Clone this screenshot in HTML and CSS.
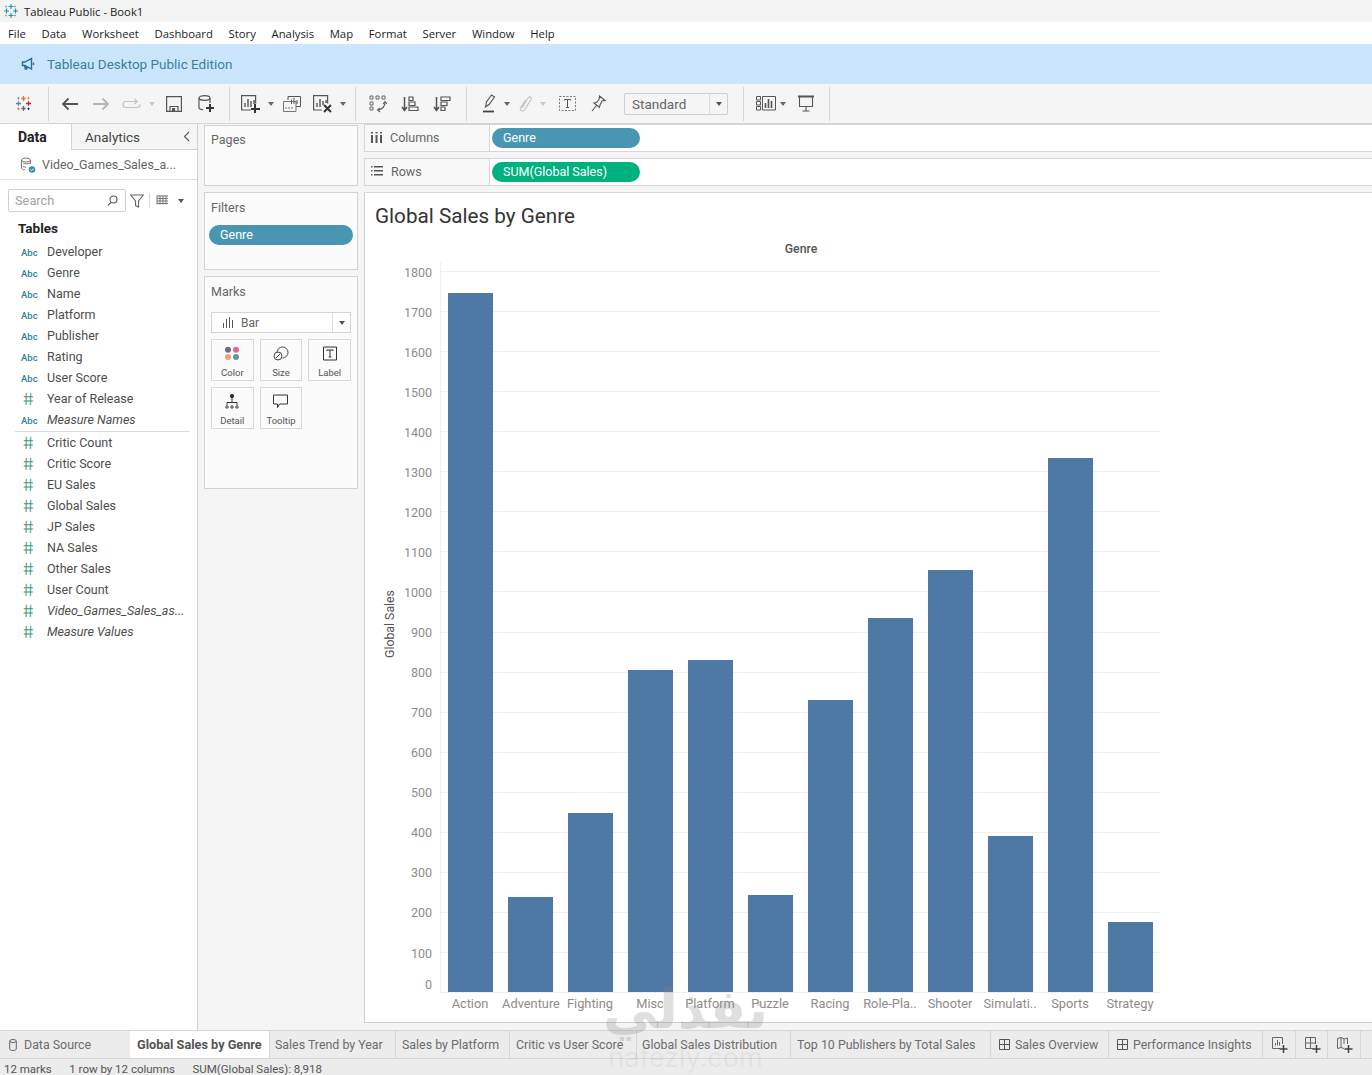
FILE: index.html
```html
<!DOCTYPE html>
<html>
<head>
<meta charset="utf-8">
<title>Tableau Public - Book1</title>
<link rel="stylesheet" href="styles.css">
</head>
<body>
<div class="titlebar">
  <svg class="app-icon" width="16" height="16" viewBox="0 0 16 16" fill="none" stroke="#2f8fa8" stroke-width="1.2">
    <path d="M8 1v5M5.5 3.5h5M8 10v5M5.500 12.500h5M1 8h5M3.500 5.500v5M10 8h5M12.500 5.500v5"/>
    <path d="M3 2.500v2M2 3.500h2M12 2.500v2M11 3.500h2M3 11.500v2M2 12.500h2M12 11.500v2M11 12.500h2" stroke="#7cb7c9" stroke-width="1"/>
  </svg>
  <span>Tableau Public - Book1</span>
</div>
<ul class="menubar">
  <li>File</li><li>Data</li><li>Worksheet</li><li>Dashboard</li><li>Story</li><li>Analysis</li><li>Map</li><li>Format</li><li>Server</li><li>Window</li><li>Help</li>
</ul>
<div class="banner">
  <svg width="14" height="14" viewBox="0 0 14 14" fill="none" stroke="#2b6f94" stroke-width="1.4">
    <path d="M1.500 5v3.500h2.500L10.500 12V1.500L4 5zM3.500 8.500l.8 3.500h1.500l-.6-3M12.500 5.500v2.500"/>
  </svg>
  <span>Tableau Desktop Public Edition</span>
</div>

<div class="toolbar">
  <div class="tb-group tb-logo">
    <svg width="17" height="17" viewBox="0 0 17 17" fill="none" stroke-width="1.300">
      <path d="M8.500 1v5M6.300 3.500h4.400" stroke="#e8762c"/>
      <path d="M8.500 11v5M6.300 13.500h4.400" stroke="#5b6591"/>
      <path d="M1 8.500h5M3.500 6.300v4.400" stroke="#59879b"/>
      <path d="M11 8.500h5M13.500 6.300v4.400" stroke="#c72037"/>
      <path d="M3.500 2v2.500M2.300 3.200h2.400" stroke="#7099a6" stroke-width="1"/>
      <path d="M13.500 2v2.500M12.300 3.200h2.400" stroke="#eb912b" stroke-width="1"/>
      <path d="M3.500 12.500v2.500M2.300 13.800h2.400" stroke="#e8762c" stroke-width="1"/>
      <path d="M13.500 12.500v2.500M12.300 13.800h2.400" stroke="#1f447e" stroke-width="1"/>
    </svg>
  </div>
  <div class="tb-group tb-g1">
    <span class="tool"><svg width="18" height="14" viewBox="0 0 18 14" fill="none" stroke="#555" stroke-width="1.800"><path d="M17 7H2M7.500 1.500 2 7l5.500 5.500"/></svg></span>
    <span class="tool"><svg width="18" height="14" viewBox="0 0 18 14" fill="none" stroke="#b5b5b5" stroke-width="1.800"><path d="M1 7h15M10.500 1.500 16 7l-5.500 5.500"/></svg></span>
    <span class="tool"><svg width="19" height="12" viewBox="0 0 19 12" fill="none" stroke="#c4c4c4" stroke-width="1.200"><path d="M15 3.500H4a3 3 0 0 0 0 6h11a3 3 0 0 0 3-3M12.500 1l2.800 2.500-2.800 2.500"/></svg></span>
    <span class="caret caret-off"></span>
    <span class="tool tool-save"><svg width="16" height="16" viewBox="0 0 16 16" fill="none" stroke="#555" stroke-width="1.200"><path d="M.6.600h14.800v14.800H.6zM4 15.400V10.500h8v4.900"/><path d="M6 12h3v3H6z" fill="#555" stroke="none"/></svg></span>
    <span class="tool tool-ds"><svg width="16" height="18" viewBox="0 0 16 18" fill="none" stroke="#555" stroke-width="1.200"><ellipse cx="6.500" cy="3" rx="5.500" ry="2.300"/><path d="M1 3v9.500c0 1.200 1.800 2 4 2.200M12 3v5"/><path d="M12 9v8M8 13h8" stroke="#333" stroke-width="2"/></svg></span>
  </div>
  <div class="tb-group tb-g2">
    <span class="tool"><svg width="19" height="18" viewBox="0 0 19 18" fill="none" stroke="#555" stroke-width="1.200"><path d="M10 15H.6V.6h14v8"/><path d="M4 12V8M7 12V4M10 12V6M13 9V5" stroke-width="1.400"/><path d="M14 9v9M10 14h9" stroke="#333" stroke-width="2"/></svg></span>
    <span class="caret"></span>
    <span class="tool"><svg width="18" height="16" viewBox="0 0 18 16" fill="none" stroke="#555" stroke-width="1"><path d="M5 4V.5h12.500v10H13"/><path d="M.5 5.500h12.500v10H.5z" stroke="#777"/><path d="M8.500 8V3.500M11 8V2M14 8V4"/><path d="M3 13v-2M6 13v-2M9 13v-2" stroke="#777"/></svg></span>
    <span class="tool"><svg width="19" height="18" viewBox="0 0 19 18" fill="none" stroke="#555" stroke-width="1.200"><path d="M9 15H.6V.6h14v8"/><path d="M4 12V8M7 12V4M10 10V6M13 8V5" stroke-width="1.400"/><path d="m11 10 7 7M18 10l-7 7" stroke="#333" stroke-width="2"/></svg></span>
    <span class="caret"></span>
  </div>
  <div class="tb-group tb-g3">
    <span class="tool"><svg width="18" height="18" viewBox="0 0 18 18" fill="none" stroke="#666" stroke-width="1"><path d="M1 1h3v3H1zM7 1h3v3H7zM13 1h3v3h-3zM1 7h3v3H1zM1 12h3v3H1z"/><path d="M16 7c0 4-2 7-7 8" stroke-width="1.300"/><path d="m14 9 2-2.500L18 9M11 13l-2.500 2 2.500 2" stroke-width="1.200"/></svg></span>
    <span class="tool tool-wide"><svg width="18" height="16" viewBox="0 0 18 16" fill="none" stroke="#555" stroke-width="1.200"><path d="M3.500 1v13M1 11l2.500 3.500L6 11" stroke-width="1.500"/><path d="M8 1h4v3.500H8zM8 6h6v3.500H8zM8 11h9v3.500H8z"/></svg></span>
    <span class="tool tool-wide"><svg width="18" height="16" viewBox="0 0 18 16" fill="none" stroke="#555" stroke-width="1.200"><path d="M3.500 1v13M1 11l2.500 3.500L6 11" stroke-width="1.500"/><path d="M8 1h9v3.500H8zM8 6h6v3.500H8zM8 11h4v3.500H8z"/></svg></span>
  </div>
  <div class="tb-group tb-g4">
    <span class="tool-sm"><svg width="14" height="19" viewBox="0 0 14 19" fill="none" stroke="#555" stroke-width="1.100"><path d="M3.500 13 4.500 8 9.500 1l3 2-5 7zM3.500 13l4-3"/><path d="M1 17.500h11" stroke="#444" stroke-width="1.800"/></svg></span>
    <span class="caret"></span>
    <span class="tool-sm"><svg width="13" height="17" viewBox="0 0 13 17" fill="none" stroke="#c4c4c4" stroke-width="1.200"><path d="M3 13 9 3c1.500-2.200 4-.8 3 1.500L5.500 15c-1.500 2-5 .5-4-2L6.500 5"/></svg></span>
    <span class="caret caret-off"></span>
    <span class="tool tool-t"><svg width="17" height="15" viewBox="0 0 17 15" fill="none" stroke="#777" stroke-width="1"><path d="M.5.500h16v14H.5z" stroke-dasharray="2 1.500"/><path d="M5.500 4.500v-1h6v1M8.500 3.500v8M7 11.500h3" stroke="#555"/></svg></span>
    <span class="tool"><svg width="15" height="17" viewBox="0 0 15 17" fill="none" stroke="#555" stroke-width="1.100"><path d="m8.500 1 5.500 4.500-3 .5-2 4-.5 2.500L3 8l2.500-.5L8 4.500zM5.500 10.500 1 16"/></svg></span>
    <div class="select">
      <span class="select-text">Standard</span>
      <span class="select-arrow"><span class="caret caret-dark"></span></span>
    </div>
  </div>
  <div class="tb-group tb-g5">
    <span class="tool"><svg width="20" height="15" viewBox="0 0 20 15" fill="none" stroke="#555" stroke-width="1"><path d="M.5.500h4v3.500h-4zM.5 5.500h4V9h-4zM.5 10.500h4V14h-4zM6.500.500h13v13.500h-13z"/><path d="M9.500 12V7M12.500 12V3M15.500 12V5" stroke-width="1.600"/></svg></span>
    <span class="caret caret-tight"></span>
    <span class="tool"><svg width="18" height="17" viewBox="0 0 18 17" fill="none" stroke="#555" stroke-width="1.100"><path d="M1 1.500h16" stroke-width="2"/><path d="M2.500 2v9.500h13V2M9 11.500V16M5.500 16h7"/></svg></span>
  </div>
</div>

<div class="main">
  <div class="data-pane">
    <div class="pane-tabs">
      <div class="pane-tab active">Data</div>
      <div class="pane-tab">Analytics<svg class="collapse" width="7" height="11" viewBox="0 0 7 11" fill="none" stroke="#555" stroke-width="1.100"><path d="M6 1 1.500 5.500 6 10"/></svg></div>
    </div>
    <div class="source">
      <svg width="16" height="16" viewBox="0 0 16 16" fill="none" stroke="#777" stroke-width="1"><ellipse cx="6" cy="3" rx="4.500" ry="2"/><path d="M1.500 3v8c0 1 1.500 2 3.500 2M10.500 3v4M3 6c2 1 5 1 7 0M3 9.500c1 .5 2 .7 3 .7"/><circle cx="12" cy="12.500" r="3.300" fill="#3d8eb0" stroke="none"/><path d="m10.500 12.500 1.100 1.100 2-2" stroke="#fff"/></svg>
      <span>Video_Games_Sales_a...</span>
    </div>
    <div class="search-row">
      <div class="search">
        <span>Search</span>
        <svg width="11" height="11" viewBox="0 0 11 11" fill="none" stroke="#555" stroke-width="1.100"><circle cx="6.500" cy="4.500" r="3.500"/><path d="M4 7.300 1 10.300"/></svg>
      </div>
      <svg class="filter-icon" width="14" height="14" viewBox="0 0 14 14" fill="none" stroke="#666" stroke-width="1.100"><path d="M.7 1h12.600L8.500 7v6L5.500 11.500V7z"/></svg>
      <span class="search-sep"></span>
      <svg width="13" height="11" viewBox="0 0 13 11" fill="none" stroke="#777" stroke-width="1"><path d="M1 1h11M1 3.500h11M1 6h11M1 8.500h11M1 .5v9M4 .5v9M7 .5v9M10 .5v9"/></svg>
      <span class="caret caret-dark"></span>
    </div>
    <div class="tables-head">Tables</div>
    <ul class="fields">
      <li><span class="f-abc">Abc</span>Developer</li>
      <li><span class="f-abc">Abc</span>Genre</li>
      <li><span class="f-abc">Abc</span>Name</li>
      <li><span class="f-abc">Abc</span>Platform</li>
      <li><span class="f-abc">Abc</span>Publisher</li>
      <li><span class="f-abc">Abc</span>Rating</li>
      <li><span class="f-abc">Abc</span>User Score</li>
      <li><span class="f-num">#</span>Year of Release</li>
      <li class="calc"><span class="f-abc">Abc</span>Measure Names</li>
    </ul>
    <ul class="fields measures">
      <li><span class="f-num">#</span>Critic Count</li>
      <li><span class="f-num">#</span>Critic Score</li>
      <li><span class="f-num">#</span>EU Sales</li>
      <li><span class="f-num">#</span>Global Sales</li>
      <li><span class="f-num">#</span>JP Sales</li>
      <li><span class="f-num">#</span>NA Sales</li>
      <li><span class="f-num">#</span>Other Sales</li>
      <li><span class="f-num">#</span>User Count</li>
      <li class="calc"><span class="f-num">#</span>Video_Games_Sales_as...</li>
      <li class="calc"><span class="f-num">#</span>Measure Values</li>
    </ul>
  </div>

  <div class="cards">
    <div class="card card-pages"><div class="card-title">Pages</div></div>
    <div class="card card-filters">
      <div class="card-title">Filters</div>
      <div class="pill pill-filter">Genre</div>
    </div>
    <div class="card card-marks">
      <div class="card-title">Marks</div>
      <div class="mark-type">
        <svg width="13" height="11" viewBox="0 0 13 11" fill="none" stroke="#555" stroke-width="1"><path d="M1.500 11V6M4.500 11V2M7.500 11V0M10.500 11V3"/></svg>
        <span>Bar</span>
        <span class="mark-arrow"><span class="caret caret-dark"></span></span>
      </div>
      <div class="mark-grid">
        <div class="mark-btn">
          <svg width="16" height="15" viewBox="0 0 16 15"><circle cx="4" cy="3.700" r="3" fill="#6c6a87"/><circle cx="12" cy="3.700" r="3" fill="#e8648a"/><circle cx="4" cy="11" r="3" fill="#eda27c"/><circle cx="12" cy="11" r="3" fill="#5d9c96"/></svg>
          <span>Color</span>
        </div>
        <div class="mark-btn">
          <svg width="16" height="15" viewBox="0 0 16 15" fill="none" stroke="#444" stroke-width="1"><path d="M4 6.500A5.500 5.500 0 1 1 9.500 12"/><circle cx="5" cy="10" r="4"/><path d="m3 12 4-4"/></svg>
          <span>Size</span>
        </div>
        <div class="mark-btn">
          <svg width="14" height="15" viewBox="0 0 14 14" fill="none" stroke="#333" stroke-width="1"><path d="M.5.500h13v13H.5zM4 4.500V3.500h6v1M7 3.500v7M5.700 10.500h2.600"/></svg>
          <span>Label</span>
        </div>
        <div class="mark-btn">
          <svg width="14" height="15" viewBox="0 0 14 15" fill="none" stroke="#333" stroke-width="1"><circle cx="7" cy="2" r="1.700" fill="#333"/><path d="M7 4v5M2 11V8.500h10V11"/><circle cx="2" cy="13" r="1.200"/><circle cx="7" cy="13" r="1.200"/><circle cx="12" cy="13" r="1.200"/></svg>
          <span>Detail</span>
        </div>
        <div class="mark-btn">
          <svg width="15" height="15" viewBox="0 0 15 14" fill="none" stroke="#333" stroke-width="1"><path d="M.5.500h14v9H6.500L4.500 13V9.500h-4z"/></svg>
          <span>Tooltip</span>
        </div>
      </div>
    </div>
  </div>

  <div class="view">
    <div class="shelf">
      <div class="shelf-label">
        <svg width="11" height="11" viewBox="0 0 11 11" fill="#555"><path d="M0 3h2v8H0zM4.500 3h2v8h-2zM9 3h2v8H9zM0 0h2v1.500H0zM4.500 0h2v1.500h-2zM9 0h2v1.500H9z"/></svg>
        Columns
      </div>
      <div class="shelf-body"><div class="pill pill-dim">Genre</div></div>
    </div>
    <div class="shelf">
      <div class="shelf-label">
        <svg width="12" height="10" viewBox="0 0 12 10" fill="#555"><path d="M3 0h9v1.500H3zM3 4h9v1.500H3zM3 8h9v1.500H3zM0 0h1.500v1.500H0zM0 4h1.500v1.500H0zM0 8h1.500v1.500H0z"/></svg>
        Rows
      </div>
      <div class="shelf-body"><div class="pill pill-meas">SUM(Global Sales)</div></div>
    </div>
    <div class="sheet">
      <h1 class="sheet-title">Global Sales by Genre</h1>
      <svg class="chart" width="1007" height="783" viewBox="365 239 1007 783">
        <g stroke="#efefef" stroke-width="1">
          <path d="M440 271.500H1160M440 311.500H1160M440 351.500H1160M440 391.500H1160M440 431.500H1160M440 471.500H1160M440 511.500H1160M440 551.500H1160M440 591.500H1160M440 632.500H1160M440 672.500H1160M440 712.500H1160M440 752.500H1160M440 792.500H1160M440 832.500H1160M440 872.500H1160M440 912.500H1160M440 952.500H1160M440 992.500H1160M440.500 262V992"/>
        </g>
        <g fill="#4e79a7">
          <rect x="448" y="293" width="45" height="699"/>
          <rect x="508" y="897" width="45" height="95"/>
          <rect x="568" y="813" width="45" height="179"/>
          <rect x="628" y="670" width="45" height="322"/>
          <rect x="688" y="660" width="45" height="332"/>
          <rect x="748" y="895" width="45" height="97"/>
          <rect x="808" y="700" width="45" height="292"/>
          <rect x="868" y="618" width="45" height="374"/>
          <rect x="928" y="570" width="45" height="422"/>
          <rect x="988" y="836" width="45" height="156"/>
          <rect x="1048" y="458" width="45" height="534"/>
          <rect x="1108" y="922" width="45" height="70"/>
        </g>
        <g class="axis-y" text-anchor="end">
          <text x="432" y="276.500">1800</text><text x="432" y="316.500">1700</text><text x="432" y="356.500">1600</text><text x="432" y="396.500">1500</text><text x="432" y="436.500">1400</text><text x="432" y="476.500">1300</text><text x="432" y="516.500">1200</text><text x="432" y="556.500">1100</text><text x="432" y="596.500">1000</text><text x="432" y="637">900</text><text x="432" y="677">800</text><text x="432" y="717">700</text><text x="432" y="757">600</text><text x="432" y="797">500</text><text x="432" y="837">400</text><text x="432" y="877">300</text><text x="432" y="917">200</text><text x="432" y="957.500">100</text><text x="432" y="988.500">0</text>
        </g>
        <g class="axis-x" text-anchor="middle">
          <text x="470" y="1008">Action</text><text x="531" y="1008">Adventure</text><text x="590" y="1008">Fighting</text><text x="650" y="1008">Misc</text><text x="710" y="1008">Platform</text><text x="770" y="1008">Puzzle</text><text x="830" y="1008">Racing</text><text x="890" y="1008">Role-Pla..</text><text x="950" y="1008">Shooter</text><text x="1010" y="1008">Simulati..</text><text x="1070" y="1008">Sports</text><text x="1130" y="1008">Strategy</text>
        </g>
        <text class="axis-title axis-top" x="801" y="253" text-anchor="middle">Genre</text>
        <text class="axis-title" transform="translate(394 624) rotate(-90)" text-anchor="middle">Global Sales</text>
      </svg>
    </div>
  </div>
</div>

<div class="tabs">
  <div class="tab tab-source">
    <svg width="8" height="12" viewBox="0 0 8 12" fill="none" stroke="#666" stroke-width="1"><ellipse cx="4" cy="2" rx="3.300" ry="1.500"/><path d="M.7 2v8c0 .8 1.500 1.500 3.300 1.500s3.300-.7 3.300-1.500V2"/></svg>
    Data Source
  </div>
  <div class="tab tab-active">Global Sales by Genre</div>
  <div class="tab tab-trend">Sales Trend by Year</div>
  <div class="tab tab-platform">Sales by Platform</div>
  <div class="tab tab-critic">Critic vs User Score</div>
  <div class="tab tab-dist">Global Sales Distribution</div>
  <div class="tab tab-top">Top 10 Publishers by Total Sales</div>
  <div class="tab tab-dash tab-overview">
    <svg width="11" height="11" viewBox="0 0 11 11" fill="none" stroke="#555" stroke-width="1"><path d="M.5.500h10v10H.5zM5.500.500v10M.5 5.500h10"/></svg>
    Sales Overview
  </div>
  <div class="tab tab-dash tab-insights">
    <svg width="11" height="11" viewBox="0 0 11 11" fill="none" stroke="#555" stroke-width="1"><path d="M.5.500h10v10H.5zM5.500.500v10M.5 5.500h10"/></svg>
    Performance Insights
  </div>
  <div class="tab tab-new"><svg width="16" height="16" viewBox="0 0 16 16" fill="none" stroke="#666" stroke-width="1"><path d="M8 11.500H.5V.5h10V7M3.500 8.500V6M5.500 8.500V3M7.500 8.500V5"/><path d="M11.500 8v8M7.500 12h8" stroke="#444" stroke-width="1.500"/></svg></div>
  <div class="tab tab-new"><svg width="16" height="16" viewBox="0 0 16 16" fill="none" stroke="#666" stroke-width="1"><path d="M8 11.500H.5V.5h10V7M5.500.5v11M.5 6h10"/><path d="M11.500 8v8M7.500 12h8" stroke="#444" stroke-width="1.500"/></svg></div>
  <div class="tab tab-new"><svg width="16" height="16" viewBox="0 0 16 16" fill="none" stroke="#666" stroke-width="1"><path d="M.5 1.500 4 .5l3 1.500 3.500-1V7M.5 1.500v10l3.500-1 3 1M4 .5v10M7 2v5"/><path d="M11.500 8v8M7.500 12h8" stroke="#444" stroke-width="1.500"/></svg></div>
</div>
<div class="status">
  <span>12 marks</span>
  <span>1 row by 12 columns</span>
  <span>SUM(Global Sales): 8,918</span>
</div>

<div class="watermark">
  <div class="wm-ar" dir="rtl" lang="ar">نفذلي</div>
  <div class="wm-en">nafezly.com</div>
</div>
</body>
</html>
```

FILE: styles.css
```css
* { box-sizing: border-box; }
html, body { height: 100%; }
body {
	position: relative;
	margin: 0;
	height: 1075px;
	overflow: hidden;
	display: flex;
	flex-direction: column;
	background: #f5f5f5;
	color: #444;
	font-family: "Roboto", "Liberation Sans", sans-serif;
	font-size: 12.5px;
}
ul, li { margin: 0; padding: 0; list-style: none; }
svg { flex: none; display: block; }

.titlebar {
	height: 22px;
	display: flex;
	align-items: center;
	gap: 5px;
	padding-left: 3px;
	background: #f3f3f3;
	color: #222;
	font-family: "Open Sans", sans-serif;
	font-size: 11.3px;
}
.menubar {
	height: 22px;
	display: flex;
	align-items: center;
	gap: 15.7px;
	padding-left: 8px;
	background: #fff;
	color: #1c1c1c;
	font-family: "Open Sans", sans-serif;
	font-size: 11.3px;
}
.banner {
	height: 40px;
	display: flex;
	align-items: center;
	gap: 12px;
	padding-left: 21px;
	background: #cbe6fc;
	color: #3d7ea3;
	font-size: 13.5px;
}

.toolbar {
	height: 40px;
	display: flex;
	align-items: center;
	background: #f5f5f5;
	border-bottom: 1px solid #d4d4d4;
}
.tb-group {
	height: 34px;
	display: flex;
	align-items: center;
	border-right: 1px solid #d5d5d5;
}
.tb-logo { width: 49px; padding-left: 15px; }
.tb-g1 { width: 181px; padding-left: 5px; }
.tb-g2 { width: 126px; padding-left: 5px; }
.tb-g3 { width: 111px; padding-left: 6px; }
.tb-g4 { width: 277px; padding-left: 9px; }
.tb-g5 { width: 86px; padding-left: 6px; }
.tool, .tool-sm {
	width: 31px;
	height: 24px;
	display: flex;
	align-items: center;
	justify-content: center;
}
.tool-sm { width: 26px; }
.tool-save { margin-left: 1px; }
.tool-ds { margin-left: 1px; }
.tool-wide { margin-left: 1px; }
.tool-t { margin-left: 4px; }
.caret {
	flex: none;
	width: 10px;
	height: 4px;
	display: flex;
	justify-content: center;
}
.caret::before {
	content: "";
	border-left: 3.5px solid transparent;
	border-right: 3.5px solid transparent;
	border-top: 4px solid #666;
}
.caret-off::before { border-top-color: #c8c8c8; }
.caret-dark::before { border-top-color: #555; }
.caret-tight { margin-left: -3px; margin-right: 2px; }
.select {
	width: 104px;
	height: 22px;
	margin-left: 10px;
	display: flex;
	align-items: center;
	border: 1px solid #cfcfcf;
	border-radius: 2px;
	background: #f5f5f5;
	font-size: 13.5px;
	color: #666;
}
.select-text { flex: 1; padding-left: 7px; }
.select-arrow {
	width: 18px;
	height: 100%;
	display: flex;
	align-items: center;
	justify-content: center;
	border-left: 1px solid #dcdcdc;
}

.main { flex: 1; min-height: 0; display: flex; }

.data-pane {
	width: 198px;
	background: #fff;
	border-right: 1px solid #cfcfcf;
}
.pane-tabs { height: 26px; display: flex; }
.pane-tab {
	position: relative;
	flex: 1;
	display: flex;
	align-items: center;
	padding-left: 13px;
	background: #f5f5f5;
	border-bottom: 1px solid #d4d4d4;
	font-size: 13.5px;
}
.pane-tab.active {
	flex: none;
	width: 72px;
	padding-left: 18px;
	background: #fff;
	border-bottom: 0;
	border-right: 1px solid #d4d4d4;
	color: #222;
	font-weight: 700;
	font-size: 14px;
}
.collapse { position: absolute; right: 7px; top: 7px; }
.source {
	height: 30px;
	display: flex;
	align-items: center;
	gap: 6px;
	padding-left: 20px;
	border-bottom: 1px solid #e2e2e2;
	color: #666;
	font-size: 12.4px;
}
.search-row {
	height: 23px;
	margin-top: 9px;
	display: flex;
	align-items: center;
	padding-left: 8px;
}
.search {
	width: 118px;
	height: 23px;
	display: flex;
	align-items: center;
	justify-content: space-between;
	padding: 0 7px 0 6px;
	border: 1px solid #cfcfcf;
	border-radius: 2px;
	color: #a3a3a3;
	font-size: 12.8px;
}
.filter-icon { margin-left: 4px; }
.search-sep { width: 1px; height: 15px; margin: 0 6px 0 5px; background: #d8d8d8; }
.search-row .caret { width: 18px; margin-left: 3px; }
.tables-head {
	height: 22px;
	margin-top: 5px;
	padding-left: 18px;
	display: flex;
	align-items: center;
	color: #222;
	font-size: 13.5px;
	font-weight: 700;
}
.fields { padding-top: 2px; }
.fields li {
	height: 21px;
	display: flex;
	align-items: center;
	color: #4d4d4d;
	font-size: 12.5px;
	white-space: nowrap;
}
.fields .calc { font-style: italic; }
.f-abc, .f-num {
	width: 47px;
	padding-left: 21px;
	font-style: normal;
	flex: none;
}
.f-abc { color: #2f7f9c; font-size: 9.5px; font-weight: 500; padding-top: 1px; }
.f-num {
	padding-left: 23px;
	color: #3f9a80;
	font-family: "Inter", sans-serif;
	font-size: 17px;
	font-weight: 300;
	transform: skewX(8deg);
}
.measures {
	margin: 1px 7px 0 15px;
	padding-top: 0;
	border-top: 1px solid #dcdcdc;
}
.measures li { margin-left: -15px; }

.cards {
	width: 166px;
	padding: 1px 6px 0;
	display: flex;
	flex-direction: column;
	gap: 6px;
}
.card {
	background: #fbfbfb;
	border: 1px solid #d3d3d3;
	padding: 7px 6px 0;
}
.card-pages { height: 61px; padding-top: 6px; }
.card-filters { height: 78px; }
.card-marks { height: 213px; }
.card-title { color: #666; font-size: 12.5px; line-height: 16px; }
.pill {
	height: 20px;
	border-radius: 10px;
	padding: 0 0 1px 11px;
	display: flex;
	align-items: center;
	color: #fff;
	font-size: 12.5px;
}
.pill-dim { background: #4996b2; }
.pill-meas { background: #00b180; }
.pill-filter { margin: 9px -2px 0; background: #4996b2; }
.mark-type {
	height: 21px;
	margin-top: 12px;
	display: flex;
	align-items: center;
	gap: 6px;
	padding-left: 10px;
	border: 1px solid #d3d3d3;
	background: #fff;
	color: #666;
	font-size: 12px;
}
.mark-type span:first-of-type { flex: 1; }
.mark-arrow {
	flex: none;
	width: 18px;
	height: 100%;
	display: flex;
	align-items: center;
	justify-content: center;
	border-left: 1px solid #dcdcdc;
}
.mark-grid {
	margin-top: 6px;
	display: grid;
	grid-template-columns: repeat(3, 1fr);
	gap: 6px;
}
.mark-btn {
	height: 42px;
	display: flex;
	flex-direction: column;
	align-items: center;
	padding-top: 6px;
	gap: 6px;
	border: 1px solid #d8d8d8;
	color: #555;
	font-size: 9.5px;
}

.view { flex: 1; min-width: 0; display: flex; flex-direction: column; }
.shelf {
	flex: none;
	height: 28px;
	margin-bottom: 6px;
	display: flex;
	background: #fff;
	border: 1px solid #d6d6d6;
	border-right: 0;
}
.shelf-label {
	width: 125px;
	display: flex;
	align-items: center;
	gap: 8px;
	padding: 0 0 2px 6px;
	background: #f8f8f8;
	border-right: 1px solid #d6d6d6;
	color: #666;
}
.shelf-body { flex: 1; padding: 3px 0 0 2px; }
.shelf-body .pill { width: 148px; }
.sheet {
	flex: none;
	height: 831px;
	background: #fff;
	border-left: 1px solid #cfcfcf;
	border-top: 1px solid #d6d6d6;
	border-bottom: 1px solid #cfcfcf;
	display: flex;
	flex-direction: column;
}
.sheet-title {
	flex: none;
	height: 46px;
	margin: 0;
	padding: 9px 0 0 10px;
	color: #333;
	font-size: 20.7px;
	font-weight: 400;
	line-height: 28px;
}
.chart text { font-family: "Roboto", sans-serif; }
.axis-y { fill: #8c8c8c; font-size: 12.5px; }
.axis-x { fill: #8c8c8c; font-size: 12.8px; }
.axis-title { fill: #555; font-size: 12.3px; }
.axis-top { font-weight: 500; }

.tabs {
	flex: none;
	height: 29px;
	display: flex;
	background: #ececec;
	border-top: 1px solid #d6d6d6;
	border-bottom: 1px solid #d6d6d6;
}
.tab {
	flex: none;
	display: flex;
	align-items: center;
	gap: 5px;
	padding-left: 6px;
	border-right: 1px solid #d6d6d6;
	color: #6d6d6d;
	font-size: 12.4px;
	white-space: nowrap;
}
.tab-source { width: 130px; padding-left: 9px; gap: 7px; border-right: 0; }
.tab-active { width: 140px; padding-left: 7px; background: #fff; color: #555; font-weight: 700; font-size: 12.7px; }
.tab-trend { width: 126px; padding-left: 5px; }
.tab-platform { width: 114px; }
.tab-critic { width: 127px; }
.tab-dist { width: 154px; padding-left: 5px; }
.tab-top { width: 200px; }
.tab-dash { padding-left: 8px; }
.tab-overview { width: 118px; }
.tab-insights { width: 154px; }
.tab-new { width: 32.5px; padding-left: 9px; }
.status {
	flex: none;
	height: 16px;
	display: flex;
	align-items: center;
	gap: 17.5px;
	padding: 3px 0 0 4px;
	background: #ececec;
	color: #555;
	font-size: 11.5px;
}
.watermark {
	position: absolute;
	left: 598px;
	top: 979px;
	width: 175px;
	text-align: center;
	color: rgba(130, 130, 130, 0.26);
	pointer-events: none;
}
.wm-ar {
	font-family: "DejaVu Sans", sans-serif;
	font-size: 54px;
	font-weight: 700;
	line-height: 62px;
}
.wm-en {
	font-family: "Inter", sans-serif;
	font-size: 27px;
	line-height: 30px;
	margin-top: 2px;
	color: rgba(130, 130, 130, 0.1);
}
```
